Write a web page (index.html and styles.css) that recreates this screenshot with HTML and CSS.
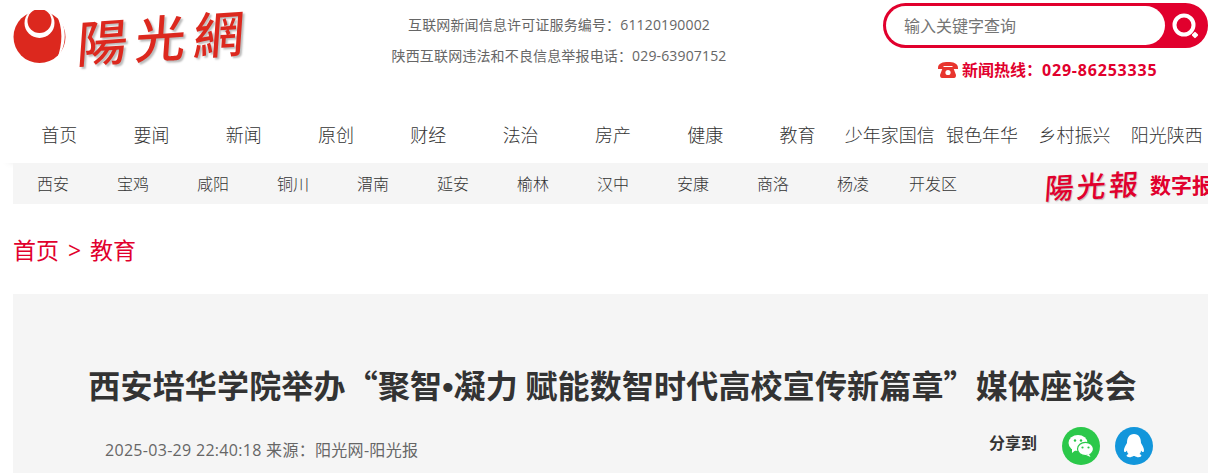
FILE: index.html
```html
<!DOCTYPE html>
<html lang="zh-CN">
<head>
    <meta charset="UTF-8">
    <title>西安培华学院举办“聚智•凝力 赋能数智时代高校宣传新篇章”媒体座谈会</title>
    <link rel="stylesheet" href="styles.css">
</head>
<body>
    <!-- top header -->
    <header class="header">
        <a class="logo" href="#">
            <svg class="logo-mark" width="54" height="54" viewBox="0 0 54 54">
                <circle cx="26.500" cy="27" r="26" fill="#dc281e"/>
                <path d="M43 4 C54 14 55 34 44 49 C50 34 50 16 43 4Z" fill="#fff"/>
                <circle cx="26.500" cy="13" r="15" fill="#fff"/>
                <circle cx="26.500" cy="11" r="12" fill="#dc281e"/>
            </svg>
            <span class="logo-text">陽光網</span>
        </a>
        <div class="license">
            <p>互联网新闻信息许可证服务编号：61120190002</p>
            <p>陕西互联网违法和不良信息举报电话：029-63907152</p>
        </div>
        <div class="tools">
            <form class="search">
                <input class="search-input" type="text" placeholder="输入关键字查询">
                <button class="search-btn" type="button" aria-label="搜索">
                    <svg width="30" height="32" viewBox="0 0 30 32">
                        <circle cx="14" cy="14" r="9.500" fill="none" stroke="#fff" stroke-width="4"/>
                        <rect x="22.500" y="21.500" width="5" height="5" rx="1" fill="#fff" transform="rotate(45 25 24)"/>
                    </svg>
                </button>
            </form>
            <div class="hotline">
                <svg width="20" height="16" viewBox="0 0 20 16">
                    <path d="M0 6 C0 1 5 0 10 0 C15 0 20 1 20 6 L20 7 L14.500 7 L14.500 4 L5.500 4 L5.500 7 L0 7Z" fill="#e8352e"/>
                    <path d="M5 5 L15 5 L18 13 Q18 16 16 16 L4 16 Q2 16 2 13Z" fill="#e8352e"/>
                    <circle cx="10" cy="10.500" r="2.600" fill="#fff"/>
                </svg>
                <span>新闻热线：<em>029-86253335</em></span>
            </div>
        </div>
    </header>

    <!-- main nav -->
    <nav class="main-nav">
        <a href="#">首页</a>
        <a href="#">要闻</a>
        <a href="#">新闻</a>
        <a href="#">原创</a>
        <a href="#">财经</a>
        <a href="#">法治</a>
        <a href="#">房产</a>
        <a href="#">健康</a>
        <a href="#">教育</a>
        <a href="#">少年家国信</a>
        <a href="#">银色年华</a>
        <a href="#">乡村振兴</a>
        <a href="#">阳光陕西</a>
    </nav>

    <div class="sub-nav">
        <a href="#">西安</a>
        <a href="#">宝鸡</a>
        <a href="#">咸阳</a>
        <a href="#">铜川</a>
        <a href="#">渭南</a>
        <a href="#">延安</a>
        <a href="#">榆林</a>
        <a href="#">汉中</a>
        <a href="#">安康</a>
        <a href="#">商洛</a>
        <a href="#">杨凌</a>
        <a href="#">开发区</a>
        <div class="paper">
            <span class="paper-logo">陽光報</span>
            <span class="paper-name">数字报</span>
        </div>
    </div>

    <div class="crumbs"><a href="#">首页</a> &gt; <a href="#">教育</a></div>

    <!-- article head -->
    <section class="article">
        <h1>西安培华学院举办“聚智<span class="dot">•</span>凝力 赋能数智时代高校宣传新篇章”媒体座谈会</h1>
        <div class="meta">
            <span class="meta-info">2025-03-29 22:40:18 来源：阳光网-阳光报</span>
            <div class="share">
                <b>分享到</b>
                <a class="share-btn wechat" href="#" aria-label="微信">
                    <svg width="26" height="24" viewBox="0 0 26 24">
                        <ellipse cx="10" cy="9" rx="9.500" ry="8" fill="#fff"/>
                        <path d="M4 14 L4 19 L9 15Z" fill="#fff"/>
                        <ellipse cx="17.500" cy="15" rx="8" ry="6.600" stroke="#2bc84a" stroke-width="1.200" fill="#fff"/>
                        <path d="M21 20 L22.500 23 L18 21Z" fill="#fff"/>
                        <circle cx="7" cy="6.500" r="1.200" fill="#2bc84a"/>
                        <circle cx="13" cy="6.500" r="1.200" fill="#2bc84a"/>
                        <circle cx="14.500" cy="13.500" r="1.100" fill="#2bc84a"/>
                        <circle cx="20.500" cy="13.500" r="1.100" fill="#2bc84a"/>
                    </svg>
                </a>
                <a class="share-btn qq" href="#" aria-label="QQ">
                    <svg width="22" height="24" viewBox="0 0 22 24">
                        <path d="M11 0 C16 0 18 4 18 9 C20 12 22 16 20.500 18 C19.500 18.500 18.500 17 18 16.500 C18 18 17.500 19 16.500 20 C18 20.500 19 21.500 18 22.500 C16 24 13 23 11.500 22 L10.500 22 C9 23 6 24 4 22.500 C3 21.500 4 20.500 5.500 20 C4.500 19 4 18 4 16.500 C3.500 17 2.500 18.500 1.500 18 C0 16 2 12 4 9 C4 4 6 0 11 0Z" fill="#fff"/>
                    </svg>
                </a>
            </div>
        </div>
    </section>
</body>
</html>
```

FILE: styles.css
```css
html, body {
    margin: 0;
    padding: 0;
    height: 473px;
    overflow: hidden;
}

body {
    width: 1208px;
    font-family: "Open Sans", "Noto Sans CJK SC", sans-serif;
    color: #333;
    background-color: #fff;
}

a {
    color: inherit;
    text-decoration: none;
}

p {
    margin: 0;
}

.header {
    display: flex;
    height: 116px;
    padding-left: 13px;
}

.logo {
    display: flex;
    align-items: flex-start;
    width: 300px;
    height: 80px;
    padding-top: 10px;
    box-sizing: border-box;
}

.logo-text {
    margin-left: 11px;
    font-family: "Noto Sans CJK SC", sans-serif;
    font-size: 50px;
    font-weight: 500;
    line-height: 50px;
    color: #dc281e;
    letter-spacing: 8px;
    transform: skewX(-4deg) skewY(-4deg);
    text-shadow: 2px 2px 2px #bbb;
    white-space: nowrap;
}

.license {
    width: 518px;
    margin-left: -13px;
    padding-top: 9px;
    font-size: 14px;
    line-height: 31px;
    color: #666;
    letter-spacing: 0.15px;
    text-align: center;
}

.tools {
    margin-left: 65px;
    padding-top: 3px;
}

.search {
    display: flex;
    width: 325px;
    height: 45px;
    box-sizing: border-box;
    border: 3px solid #e1002d;
    border-radius: 23px;
    background-color: #e1002d;
}

.search-input {
    width: 280px;
    height: 39px;
    box-sizing: border-box;
    padding: 0 18px 2px;
    border: none;
    border-radius: 20px;
    outline: none;
    background-color: #fff;
    font-family: "Noto Sans CJK SC", sans-serif;
    font-size: 16px;
}

.search-input::placeholder {
    color: #757575;
}

.search-btn {
    width: 40px;
    height: 39px;
    padding: 5px 0 0;
    border: none;
    background: none;
}

.hotline {
    display: flex;
    align-items: center;
    gap: 4px;
    margin-top: 10px;
    padding-left: 55px;
    font-size: 16px;
    font-weight: 700;
    line-height: 24px;
    color: #e1002d;
}

.hotline em {
    font-style: normal;
    letter-spacing: 0.8px;
}

.main-nav {
    display: flex;
    height: 47px;
    padding-left: 13px;
    box-shadow: 0 6px 8px -8px rgba(0, 0, 0, 0.12);
}

.main-nav a {
    width: 92.3px;
    flex: none;
    font-family: "Noto Sans CJK SC", sans-serif;
    font-size: 18px;
    font-weight: 300;
    line-height: 36px;
    text-align: center;
    white-space: nowrap;
}

.sub-nav {
    display: flex;
    height: 41px;
    margin-left: 13px;
    background-color: #f5f5f5;
    overflow: hidden;
}

.sub-nav > a {
    width: 80px;
    flex: none;
    font-size: 16px;
    font-weight: 300;
    line-height: 43px;
    text-align: center;
}

.paper {
    display: flex;
    align-items: center;
    flex: none;
    margin-left: 72px;
    color: #e1002d;
    white-space: nowrap;
}

.paper-logo {
    font-family: "Noto Sans CJK SC", sans-serif;
    font-size: 29px;
    font-weight: 500;
    line-height: 30px;
    letter-spacing: 3px;
    transform: skewX(-4deg) skewY(-3deg);
    text-shadow: 1px 1px 1px #bbb;
}

.paper-name {
    margin-left: 9px;
    font-size: 21px;
    font-weight: 700;
}

.crumbs {
    height: 90px;
    padding-left: 13px;
    font-size: 23px;
    word-spacing: 3px;
    line-height: 92px;
    color: #e1002d;
}

.article {
    height: 179px;
    margin-left: 13px;
    background-color: #f5f5f5;
    overflow: hidden;
}

.article h1 {
    margin: 65px 0 0;
    padding-left: 4px;
    font-family: "Noto Sans CJK SC", sans-serif;
    font-size: 32px;
    font-weight: 700;
    line-height: 50px;
    letter-spacing: 0.17px;
    text-align: center;
    white-space: nowrap;
}

.dot {
    font-family: "Liberation Sans", sans-serif;
}

.meta {
    display: flex;
    align-items: center;
    justify-content: space-between;
    width: 1140px;
    margin-top: 15px;
    padding-left: 92px;
    box-sizing: border-box;
}

.meta-info {
    padding-top: 4px;
    font-size: 16px;
    letter-spacing: 0.3px;
    color: #666;
}

.share {
    display: flex;
    align-items: center;
    gap: 15px;
    margin-bottom: 2px;
}

.share b {
    margin-right: 10px;
    margin-bottom: 9px;
    font-size: 16px;
}

.share-btn {
    display: flex;
    align-items: center;
    justify-content: center;
    width: 38px;
    height: 38px;
    border-radius: 50%;
}

.wechat {
    background-color: #2bc84a;
}

.qq {
    background-color: #1296db;
}
```
